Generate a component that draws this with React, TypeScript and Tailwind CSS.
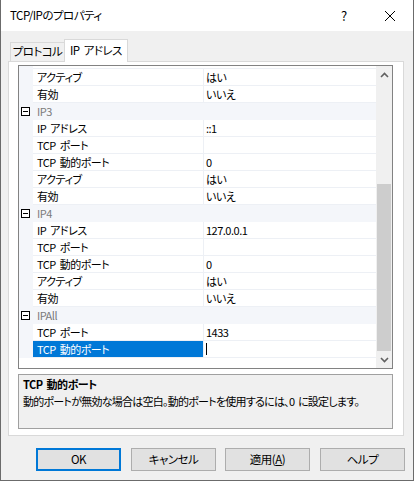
import React from "react";

type Row =
  | { t: "p"; l: string; v: string; sel?: boolean }
  | { t: "c"; l: string };

const rows: Row[] = [
  { t: "p", l: "アクティブ", v: "はい" },
  { t: "p", l: "有効", v: "いいえ" },
  { t: "c", l: "IP3" },
  { t: "p", l: "IP アドレス", v: "::1" },
  { t: "p", l: "TCP ポート", v: "" },
  { t: "p", l: "TCP 動的ポート", v: "0" },
  { t: "p", l: "アクティブ", v: "はい" },
  { t: "p", l: "有効", v: "いいえ" },
  { t: "c", l: "IP4" },
  { t: "p", l: "IP アドレス", v: "127.0.0.1" },
  { t: "p", l: "TCP ポート", v: "" },
  { t: "p", l: "TCP 動的ポート", v: "0" },
  { t: "p", l: "アクティブ", v: "はい" },
  { t: "p", l: "有効", v: "いいえ" },
  { t: "c", l: "IPAll" },
  { t: "p", l: "TCP ポート", v: "1433" },
  { t: "p", l: "TCP 動的ポート", v: "", sel: true },
];

function MinusBox() {
  return (
    <svg width="9" height="9" viewBox="0 0 9 9" className="block">
      <rect x="0.5" y="0.5" width="8" height="8" fill="white" stroke="#000" strokeWidth="1" />
      <line x1="2" y1="4.5" x2="7" y2="4.5" stroke="#000" strokeWidth="1" />
    </svg>
  );
}

function Chevron({ up }: { up: boolean }) {
  return (
    <svg width="9" height="6" viewBox="0 0 9 6" className="block">
      <polyline
        points={up ? "1,5 4.5,1.5 8,5" : "1,1 4.5,4.5 8,1"}
        fill="none"
        stroke="#606060"
        strokeWidth="1.6"
      />
    </svg>
  );
}

export default function App() {
  return (
    <div className="w-[414px] h-[481px] bg-[#f0f0f0] border-x border-b border-[#6b6b6b] flex flex-col text-[11px] tracking-[-0.5px] [word-spacing:2px] text-black font-['Noto_Sans_CJK_JP',sans-serif] [font-feature-settings:'palt'] overflow-hidden whitespace-nowrap">
      {/* Title bar */}
      <div className="h-[31px] bg-white flex items-center shrink-0">
        <span className="ml-[9px] leading-none text-[11.5px]">TCP/IPのプロパティ</span>
        <div className="ml-auto flex h-full">
          <div className="w-[46px] h-full flex items-center justify-center text-[13px] tracking-normal">?</div>
          <div className="w-[46px] h-full flex items-center justify-center">
            <svg width="10" height="10" viewBox="0 0 10 10" className="block">
              <line x1="0" y1="0" x2="10" y2="10" stroke="#000" strokeWidth="1" />
              <line x1="10" y1="0" x2="0" y2="10" stroke="#000" strokeWidth="1" />
            </svg>
          </div>
        </div>
      </div>

      {/* Tabs */}
      <div className="mt-[8px] flex items-end pl-[9px] shrink-0">
        <div className="w-[55px] h-[19px] border border-b-0 border-[#d9d9d9] bg-[#f0f0f0] flex items-center justify-center text-[11.5px]">
          プロトコル
        </div>
        <div className="relative z-10 -ml-px -mb-px w-[64px] h-[23px] border border-b-0 border-[#d9d9d9] bg-white flex items-center justify-center text-[11.5px]">
          IP アドレス
        </div>
      </div>

      {/* Tab panel */}
      <div className="ml-[7px] mr-[9px] h-[375px] shrink-0 border border-[#d9d9d9] bg-white pt-[3px] pl-[9px] pr-[10px] pb-[6px] flex flex-col">
        {/* Property grid */}
        <div className="h-[304px] shrink-0 border border-[#828282] flex bg-white">
          <div className="flex-1 flex flex-col overflow-hidden">
            <div className="h-[3px] flex shrink-0">
              <div className="w-[14px] bg-[#f4f6fa]" />
              <div className="flex-1 border-b border-[#edf0f5]" />
            </div>
            {rows.map((r, i) =>
              r.t === "c" ? (
                <div key={i} className="h-[17px] shrink-0 flex items-center bg-[#f4f6fa]">
                  <div className="w-[14px] h-full flex items-center pl-[2px]">
                    <MinusBox />
                  </div>
                  <span className="pl-[4px] text-[#7a7a7a] leading-none">{r.l}</span>
                </div>
              ) : (
                <div key={i} className="h-[17px] shrink-0 flex">
                  <div className="w-[14px] h-full bg-[#f4f6fa]" />
                  <div className="flex-1 flex border-b border-[#edf0f5]">
                    <div
                      className={
                        "w-[171px] border-r border-[#edf0f5] flex items-center pl-[4px] leading-none " +
                        (r.sel ? "bg-[#0078d7] text-white" : "")
                      }
                    >
                      {r.l}
                    </div>
                    <div className="flex-1 flex items-center pl-[2px] leading-none">
                      {r.sel ? <div className="w-px h-[12px] bg-black" /> : r.v}
                    </div>
                  </div>
                </div>
              )
            )}
          </div>
          {/* Scrollbar */}
          <div className="w-[16px] bg-[#f0f0f0] flex flex-col">
            <div className="h-[17px] flex items-center justify-center">
              <Chevron up />
            </div>
            <div className="h-[101px]" />
            <div className="h-[167px] mx-[1px] bg-[#cdcdcd]" />
            <div className="flex-1 flex items-center justify-center">
              <Chevron up={false} />
            </div>
          </div>
        </div>

        {/* Description */}
        <div className="mt-[5px] h-[55px] shrink-0 border border-[#a0a0a0] bg-[#f0f0f0] px-[4px] pt-[1px] leading-[17px]">
          <div className="font-bold">TCP 動的ポート</div>
          <div className="tracking-[-0.75px]">動的ポートが無効な場合は空白。動的ポートを使用するには、0 に設定します。</div>
        </div>
      </div>

      {/* Buttons */}
      <div className="mt-[12px] flex pl-[35px] shrink-0 text-[11.5px]">
        <button className="w-[85px] h-[23px] border-2 border-[#0078d7] bg-[#e1e1e1] flex items-center justify-center">
          OK
        </button>
        <button className="ml-[10px] w-[85px] h-[23px] border border-[#adadad] bg-[#e1e1e1] flex items-center justify-center">
          キャンセル
        </button>
        <button className="ml-[9px] w-[85px] h-[23px] border border-[#adadad] bg-[#e1e1e1] flex items-center justify-center">
          適用(<u>A</u>)
        </button>
        <button className="ml-[10px] w-[85px] h-[23px] border border-[#adadad] bg-[#e1e1e1] flex items-center justify-center">
          ヘルプ
        </button>
      </div>
    </div>
  );
}
